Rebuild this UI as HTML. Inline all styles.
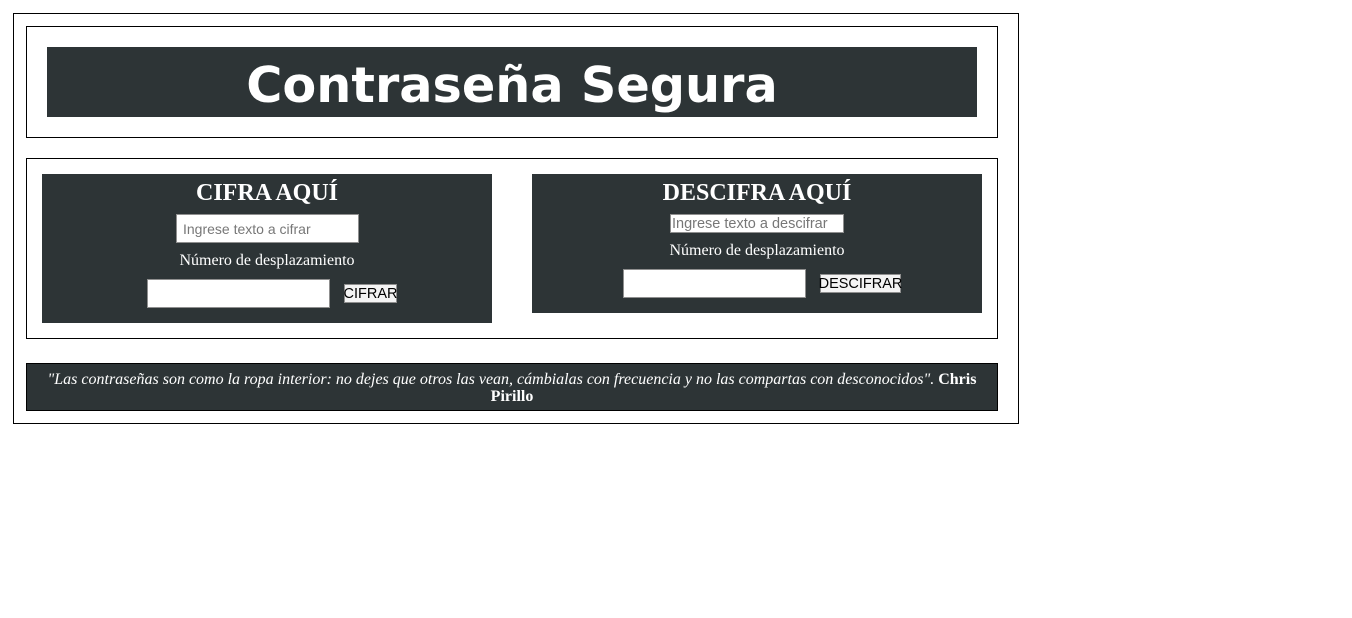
<!DOCTYPE html>
<html><head><meta charset="utf-8"><style>
body{margin:0;background:#fff;width:1352px;height:618px;position:relative;font-family:"Liberation Serif",serif}
.a{position:absolute;box-sizing:border-box}
.d{background:#2d3436;color:#fff}
.in{position:absolute;box-sizing:border-box;background:#fff;border:1px solid #8f8f8f;font-family:"Liberation Sans",sans-serif;color:#777;font-size:14px;padding-left:6px;line-height:normal;display:flex;align-items:center}
.bt{position:absolute;box-sizing:border-box;background:#f4f4f4;border:1px solid #8f8f8f;font-family:"Liberation Sans",sans-serif;color:#000;font-size:14px;display:flex;align-items:center;justify-content:center;white-space:nowrap}
.h{position:absolute;left:0;right:0;text-align:center;font-weight:bold;font-size:24px}
.l{position:absolute;left:0;right:0;text-align:center;font-size:16px}
</style></head><body>
<div class="a" style="left:13px;top:13px;width:1006px;height:411px;border:1px solid #000"></div>
<div class="a" style="left:26px;top:26px;width:972px;height:112px;border:1px solid #000"></div>
<div class="a d" style="left:47px;top:47px;width:930px;height:70px;text-align:center;font-family:'DejaVu Sans',sans-serif;font-weight:bold;font-size:49.3px;line-height:76px">Contraseña Segura</div>
<div class="a" style="left:26px;top:158px;width:972px;height:181px;border:1px solid #000"></div>
<div class="a d" style="left:42px;top:174px;width:450px;height:149px">
<div class="h" style="top:6px">CIFRA AQUÍ</div>
<div class="in" style="left:134px;top:40px;width:183px;height:29px">Ingrese texto a cifrar</div>
<div class="l" style="top:78px">Número de desplazamiento</div>
<div class="in" style="left:105px;top:105px;width:183px;height:29px"></div>
<div class="bt" style="left:302px;top:110px;width:53px;height:19px;font-size:14.5px">CIFRAR</div>
</div>
<div class="a d" style="left:532px;top:174px;width:450px;height:139px">
<div class="h" style="top:6px">DESCIFRA AQUÍ</div>
<div class="in" style="left:138px;top:40px;width:174px;height:19px;padding-left:1px;font-size:14.5px">Ingrese texto a descifrar</div>
<div class="l" style="top:68px">Número de desplazamiento</div>
<div class="in" style="left:91px;top:95px;width:183px;height:29px"></div>
<div class="bt" style="left:288px;top:100px;width:81px;height:19px;font-size:14.5px">DESCIFRAR</div>
</div>
<div class="a d" style="left:26px;top:363px;width:972px;height:48px;border:1px solid #000;text-align:center;font-size:16px;line-height:17px;padding:7px 10px 0">
<i>"Las contraseñas son como la ropa interior: no dejes que otros las vean, cámbialas con frecuencia y no las compartas con desconocidos".</i> <b>Chris Pirillo</b></div>
</body></html>
